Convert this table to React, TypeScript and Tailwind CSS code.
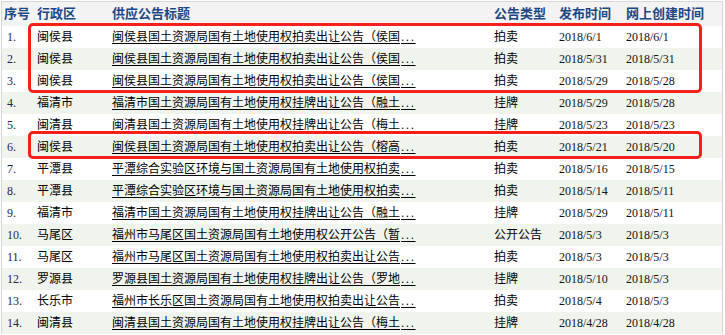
import React from "react";

interface Row {
  area: string;
  title: string;
  tail: string;
  kind: string;
  pub: string;
  created: string;
}

const rows: Row[] = [
  { area: "闽侯县", title: "闽侯县国土资源局国有土地使用权拍卖出让公告", tail: "（侯国", kind: "拍卖", pub: "2018/6/1", created: "2018/6/1" },
  { area: "闽侯县", title: "闽侯县国土资源局国有土地使用权拍卖出让公告", tail: "（侯国", kind: "拍卖", pub: "2018/5/31", created: "2018/5/31" },
  { area: "闽侯县", title: "闽侯县国土资源局国有土地使用权拍卖出让公告", tail: "（侯国", kind: "拍卖", pub: "2018/5/29", created: "2018/5/28" },
  { area: "福清市", title: "福清市国土资源局国有土地使用权挂牌出让公告", tail: "（融土", kind: "挂牌", pub: "2018/5/29", created: "2018/5/28" },
  { area: "闽清县", title: "闽清县国土资源局国有土地使用权挂牌出让公告", tail: "（梅土", kind: "挂牌", pub: "2018/5/23", created: "2018/5/23" },
  { area: "闽侯县", title: "闽侯县国土资源局国有土地使用权拍卖出让公告", tail: "（榕高", kind: "拍卖", pub: "2018/5/21", created: "2018/5/20" },
  { area: "平潭县", title: "平潭综合实验区环境与国土资源局国有土地使用权拍卖", tail: "", kind: "拍卖", pub: "2018/5/16", created: "2018/5/15" },
  { area: "平潭县", title: "平潭综合实验区环境与国土资源局国有土地使用权拍卖", tail: "", kind: "拍卖", pub: "2018/5/14", created: "2018/5/11" },
  { area: "福清市", title: "福清市国土资源局国有土地使用权挂牌出让公告", tail: "（融土", kind: "挂牌", pub: "2018/5/29", created: "2018/5/11" },
  { area: "马尾区", title: "福州市马尾区国土资源局国有土地使用权公开公告", tail: "（暂", kind: "公开公告", pub: "2018/5/3", created: "2018/5/3" },
  { area: "马尾区", title: "福州市马尾区国土资源局国有土地使用权拍卖出让公告", tail: "", kind: "拍卖", pub: "2018/5/3", created: "2018/5/3" },
  { area: "罗源县", title: "罗源县国土资源局国有土地使用权挂牌出让公告", tail: "（罗地", kind: "挂牌", pub: "2018/5/10", created: "2018/5/3" },
  { area: "长乐市", title: "福州市长乐区国土资源局国有土地使用权拍卖出让公告", tail: "", kind: "拍卖", pub: "2018/5/4", created: "2018/5/3" },
  { area: "闽清县", title: "闽清县国土资源局国有土地使用权挂牌出让公告", tail: "（梅土", kind: "挂牌", pub: "2018/4/28", created: "2018/4/28" },
];

const cjk = "font-['Liberation_Sans','Noto_Sans_CJK_SC',sans-serif]";
const num = "font-['Liberation_Serif','Noto_Sans_CJK_SC',serif]";
const cols = "grid grid-cols-[32px_75px_382px_65px_67px_1fr]";

export default function App() {
  return (
    <div className="relative w-[725px] h-[335px] bg-white overflow-hidden pt-px pl-px">
      <div className="w-[722px] border-l border-t border-r border-[#d6d6d6]">
        {/* header */}
        <div className={`${cols} h-[24px] items-center bg-[#f3f3f3] text-[13px] font-bold text-[#1d4684] ${cjk}`}>
          <div className="pl-[2px]">序号</div>
          <div className="pl-[3px]">行政区</div>
          <div className="pl-[3px]">供应公告标题</div>
          <div className="pl-[3px]">公告类型</div>
          <div className="pl-[3px]">发布时间</div>
          <div className="pl-[3px]">网上创建时间</div>
        </div>

        {rows.map((r, i) => (
          <div
            key={i}
            className={`${cols} h-[22px] items-center text-[12px] text-black ${cjk} ${i % 2 === 1 ? "bg-[#eff5ec]" : "bg-white"}`}
          >
            <div className={`pl-[5px] ${num} text-[12px] text-[#1c2650]`}>{i + 1}.</div>
            <div className="pl-[3px]">{r.area}</div>
            <div className="pl-[3px] whitespace-nowrap">
              <span className="underline underline-offset-2 decoration-1">
                {r.title}
                {r.tail}
                <span className="tracking-[1.5px] pl-[1px]">...</span>
              </span>
            </div>
            <div className="pl-[3px]">{r.kind}</div>
            <div className={`pl-[3px] ${num} text-[12px] text-[#111]`}>{r.pub}</div>
            <div className={`pl-[3px] ${num} text-[12px] text-[#111]`}>{r.created}</div>
          </div>
        ))}
      </div>

      {/* red highlight marks */}
      <div className="absolute left-[28px] top-[23px] w-[674px] h-[70px] border-[3px] border-[#f5201a] rounded-[5px]" />
      <div className="absolute left-[28px] top-[131px] w-[674px] h-[28px] border-[3px] border-[#f5201a] rounded-[5px]" />
    </div>
  );
}
